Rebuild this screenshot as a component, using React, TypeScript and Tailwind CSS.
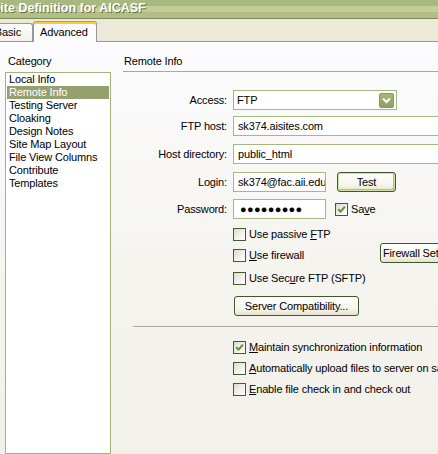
import React from "react";

function Check({ checked }: { checked?: boolean }) {
  return (
    <span className="flex h-[13px] w-[13px] shrink-0 items-center justify-center border border-[#3f5e2c] bg-[linear-gradient(135deg,#dad9d1_0%,#eeede6_45%,#ffffff_100%)]">
      {checked && (
        <svg width="9" height="9" viewBox="0 0 9 9">
          <path d="M1.2 4.2 L3.6 6.6 L7.9 1.6" stroke="#5f8e3f" strokeWidth="2" fill="none" />
        </svg>
      )}
    </span>
  );
}

function CheckRow({
  checked,
  children,
  className = "",
}: {
  checked?: boolean;
  children: React.ReactNode;
  className?: string;
}) {
  return (
    <div className={"flex h-[13px] shrink-0 items-center gap-[3px] whitespace-nowrap " + className}>
      <Check checked={checked} />
      <span className="leading-[13px]">{children}</span>
    </div>
  );
}

function XpButton({ children, className = "" }: { children: React.ReactNode; className?: string }) {
  return (
    <div
      className={
        "flex h-[20px] shrink-0 items-center whitespace-nowrap rounded-[3px] border border-[#3c5a2b] bg-[linear-gradient(to_bottom,#fffffb,#f6f4ea_70%,#e6e1cc)] " +
        className
      }
    >
      {children}
    </div>
  );
}

function FieldRow({ label, children, className = "" }: { label: string; children: React.ReactNode; className?: string }) {
  return (
    <div className={"flex h-[20px] shrink-0 items-center " + className}>
      <div className="w-[105px] shrink-0 pr-[1px] text-right">{label}</div>
      <div className="ml-[5px] flex shrink-0 items-center">{children}</div>
    </div>
  );
}

const categories = [
  "Local Info",
  "Remote Info",
  "Testing Server",
  "Cloaking",
  "Design Notes",
  "Site Map Layout",
  "File View Columns",
  "Contribute",
  "Templates",
];

export default function App() {
  return (
    <div className="flex h-[454px] w-[438px] flex-col overflow-hidden font-['Liberation_Sans',Arial,sans-serif] text-[11px] tracking-[-0.15px] text-black">
      {/* title bar */}
      <div className="flex h-[19px] shrink-0 items-start bg-[linear-gradient(to_bottom,#a8b880_0px,#a8b880_6px,#c3cc94_6px,#c3cc94_12px,#b3be87_12px,#b3be87_18px,#7b8a58_18px)]">
        <span className="ml-[-8px] mt-[1px] whitespace-nowrap text-[12.5px] font-bold leading-[14px] tracking-normal text-white [text-shadow:1px_1px_0_#66753f]">
          Site Definition for AICASF
        </span>
      </div>

      {/* tabs */}
      <div className="flex h-[23px] shrink-0 items-end border-b border-[#919b9c] bg-[#ece9d8]">
        <div className="flex h-[18px] w-[33px] items-center justify-end whitespace-nowrap rounded-tr-[3px] border-r border-t border-[#919b9c] bg-[linear-gradient(to_bottom,#fefefe,#f3f2ec)] pr-[11px]">
          Basic
        </div>
        <div className="relative mb-[-1px] flex h-[21px] w-[64px] items-center rounded-t-[3px] border-x border-t border-x-[#919b9c] border-t-[#e68b2c] bg-[#fcfcfe] pl-[6px] shadow-[inset_0_2px_0_#ffc83c]">
          Advanced
        </div>
      </div>

      {/* panel */}
      <div className="flex flex-1 bg-[linear-gradient(to_bottom,#fcfcfe,#f5f4ef_55%,#f1f0e9)] pt-[13px]">
        {/* category list */}
        <div className="ml-[5px] flex w-[106px] shrink-0 flex-col">
          <div className="h-[13px] pl-[3px] leading-[13px]">Category</div>
          <div className="mt-[4px] flex-1 border border-[#a0b57a] bg-white px-[1px]">
            {categories.map((c) => (
              <div
                key={c}
                className={
                  "h-[13px] whitespace-nowrap px-[2px] leading-[13px] " +
                  (c === "Remote Info" ? "bg-[#94a16f] text-white" : "")
                }
              >
                {c}
              </div>
            ))}
          </div>
        </div>

        {/* remote info */}
        <div className="ml-[12px] flex min-w-0 flex-1 flex-col">
          <div className="h-[17px] border-b border-[#aca899] pl-[1px] leading-[13px]">Remote Info</div>

          <FieldRow label="Access:" className="mt-[18px]">
            <div className="flex h-[20px] w-[164px] items-center justify-between border border-[#a5b97e] bg-white pl-[3px] pr-[2px]">
              <span>FTP</span>
              <span className="flex h-[15px] w-[15px] items-center justify-center rounded-[2px] border border-[#8a9b62] bg-[linear-gradient(to_bottom,#a5b67b,#8e9f64)]">
                <svg width="9" height="7" viewBox="0 0 9 7">
                  <path d="M1 1.5 L4.5 5 L8 1.5" stroke="#ffffff" strokeWidth="2" fill="none" />
                </svg>
              </span>
            </div>
          </FieldRow>

          <FieldRow label="FTP host:" className="mt-[6px]">
            <div className="flex h-[20px] w-[260px] items-center border border-[#a5b97e] bg-white pl-[4px]">sk374.aisites.com</div>
          </FieldRow>

          <FieldRow label="Host directory:" className="mt-[8px]">
            <div className="flex h-[20px] w-[260px] items-center border border-[#a5b97e] bg-white pl-[4px]">public_html</div>
          </FieldRow>

          <FieldRow label="Login:" className="mt-[8px]">
            <div className="flex h-[20px] w-[93px] items-center overflow-hidden whitespace-nowrap border border-[#a5b97e] bg-white pl-[4px]">
              sk374@fac.aii.edu
            </div>
            <XpButton className="ml-[11px] w-[59px] justify-center shadow-[inset_0_0_0_1px_#cde3a6,inset_-2px_-2px_0_#a9c77c]">
              Test
            </XpButton>
          </FieldRow>

          <FieldRow label="Password:" className="mt-[7px]">
            <div className="flex h-[20px] w-[93px] items-center border border-[#a5b97e] bg-white pl-[6px] text-[11px] tracking-[0.3px]">
              ●●●●●●●●●
            </div>
            <CheckRow checked className="ml-[9px]">
              Sa<u>v</u>e
            </CheckRow>
          </FieldRow>

          <CheckRow className="ml-[110px] mt-[9px]">
            Use passive <u>F</u>TP
          </CheckRow>

          <div className="ml-[110px] mt-[2px] flex h-[20px] shrink-0 items-start">
            <CheckRow className="mt-[6px] w-[147px]">
              <u>U</u>se firewall
            </CheckRow>
            <XpButton className="w-[100px] pl-[2px]">Firewall Settings...</XpButton>
          </div>

          <CheckRow className="ml-[110px] mt-[9px]">
            Use Sec<u>u</u>re FTP (SFTP)
          </CheckRow>

          <XpButton className="ml-[111px] mt-[11px] w-[125px] justify-center">Server Compatibility...</XpButton>

          <div className="ml-[10px] mt-[10px] border-t border-[#aca899]" />

          <CheckRow checked className="ml-[110px] mt-[14px]">
            <u>M</u>aintain synchronization information
          </CheckRow>
          <CheckRow className="ml-[110px] mt-[8px]">
            <u>A</u>utomatically upload files to server on save
          </CheckRow>
          <CheckRow className="ml-[110px] mt-[8px]">
            <u>E</u>nable file check in and check out
          </CheckRow>
        </div>
      </div>
    </div>
  );
}
